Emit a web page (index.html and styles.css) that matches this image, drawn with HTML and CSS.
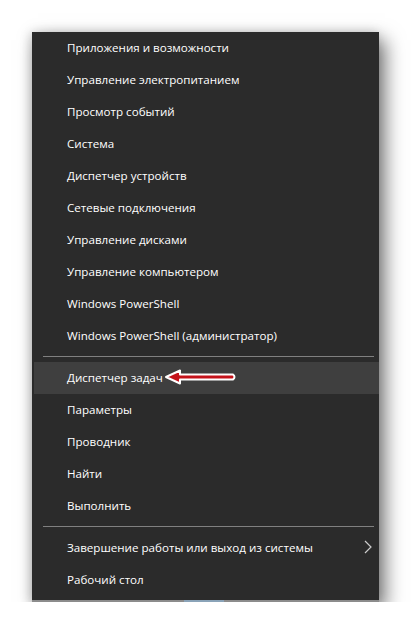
FILE: index.html
```html
<!DOCTYPE html>
<html lang="ru">
<head>
<meta charset="utf-8">
<link rel="stylesheet" href="styles.css">
</head>
<body>
<div class="menu">
  <div class="group">
    <div class="item">Приложения и возможности</div>
    <div class="item">Управление электропитанием</div>
    <div class="item">Просмотр событий</div>
    <div class="item">Система</div>
    <div class="item">Диспетчер устройств</div>
    <div class="item">Сетевые подключения</div>
    <div class="item">Управление дисками</div>
    <div class="item">Управление компьютером</div>
    <div class="item">Windows PowerShell</div>
    <div class="item">Windows PowerShell (администратор)</div>
  </div>
  <div class="sep"></div>
  <div class="group">
    <div class="item active">Диспетчер задач
      <svg class="arrow" width="76" height="18" viewBox="0 0 76 18">
        <path d="M3 9 L17 2.5 L17 6.5 L70 6.5 Q73 9 70 11.5 L17 11.5 L17 15.5 Z" fill="#c4121a" stroke="#fff" stroke-width="2" stroke-linejoin="round"/>
      </svg>
    </div>
    <div class="item">Параметры</div>
    <div class="item">Проводник</div>
    <div class="item">Найти</div>
    <div class="item">Выполнить</div>
  </div>
  <div class="sep"></div>
  <div class="group">
    <div class="item">Завершение работы или выход из системы
      <svg class="chev" width="8" height="14" viewBox="0 0 8 14"><path d="M1 1 L7 7 L1 13" fill="none" stroke="#ccc" stroke-width="1.2"/></svg>
    </div>
    <div class="item">Рабочий стол</div>
  </div>
  <div class="bottom"><span class="taskbar-mark"></span></div>
</div>
</body>
</html>
```
FILE: styles.css
```css
html, body {
  margin: 0;
  padding: 0;
  background: #fff;
}
body {
  padding: 32px 0 0 32px;
  font-family: "Open Sans", "Noto Sans", sans-serif;
}
.menu {
  width: 347px;
  background: #2b2b2b;
  box-shadow: 6px 8px 18px rgba(0, 0, 0, 0.55), -2px 0 10px rgba(0, 0, 0, 0.15);
  display: flex;
  flex-direction: column;
}
.group {
  display: flex;
  flex-direction: column;
}
.item {
  position: relative;
  height: 32px;
  box-sizing: border-box;
  display: flex;
  align-items: center;
  padding-left: 35px;
  padding-bottom: 2px;
  font-size: 11.6px;
  color: #fff;
}
.item.active {
  background: #3f3f3f;
  margin-left: 2px;
  padding-left: 33px;
}
.sep {
  height: 1px;
  background: #808080;
  margin: 4px 5px 5px 11px;
}
.arrow {
  position: absolute;
  left: 129px;
  top: 6px;
}
.chev {
  position: absolute;
  right: 7px;
  top: 8px;
}
.bottom {
  margin-top: 4px;
  height: 2px;
  background: #8c8c8c;
  position: relative;
}
.taskbar-mark {
  position: absolute;
  left: 152px;
  width: 40px;
  top: 0;
  height: 2px;
  background: #8aa3b8;
}
```
